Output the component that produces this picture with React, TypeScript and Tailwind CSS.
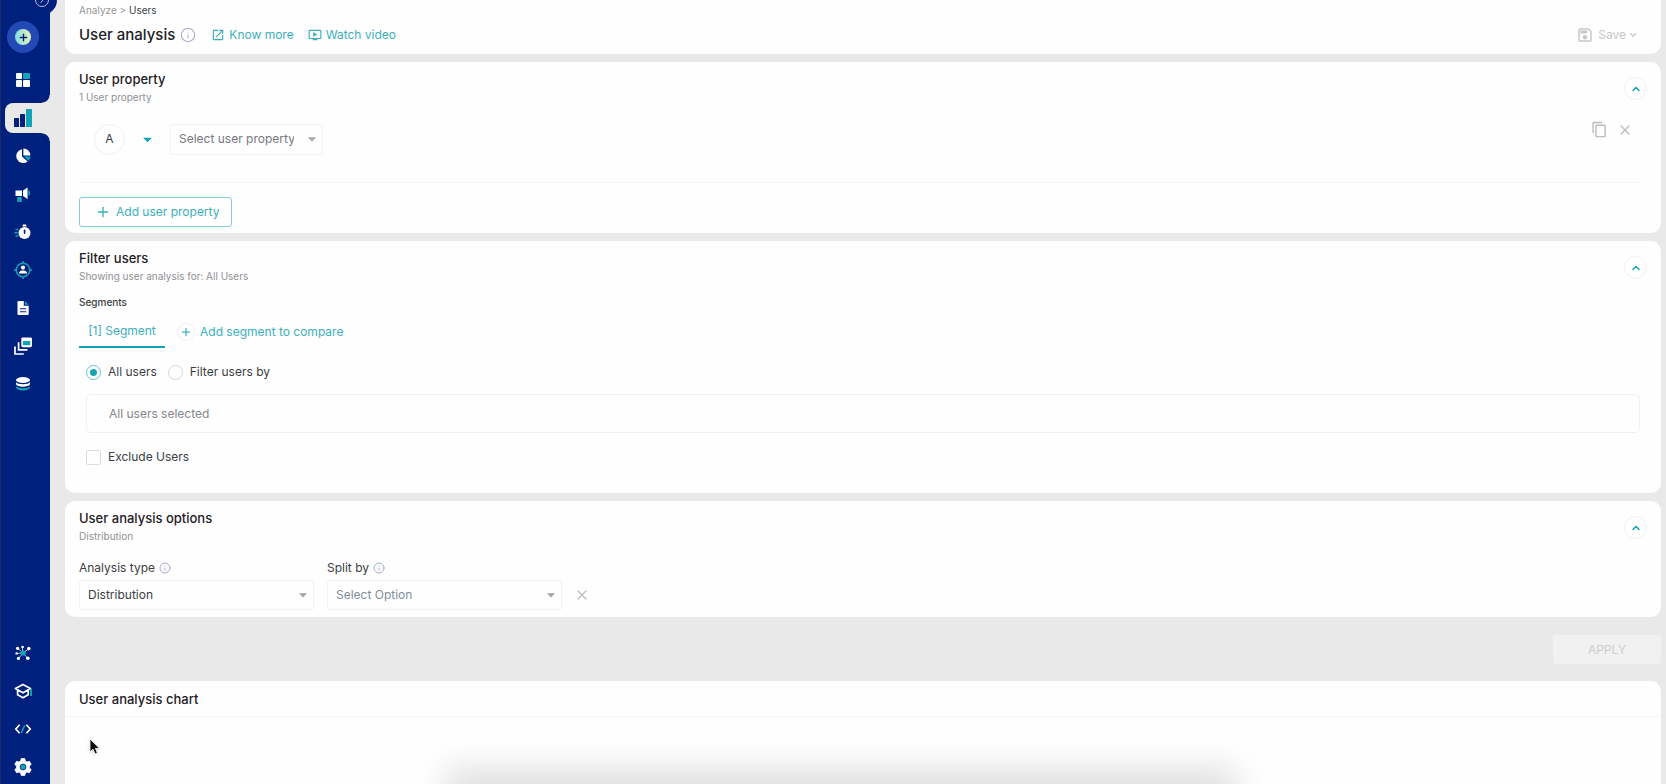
import React, { useState } from "react";
import { ChevronDown, ChevronRight, ChevronUp, Info, Plus, X } from "lucide-react";
import {
  MdArrowDropDown,
  MdContentCopy,
  MdOndemandVideo,
  MdOpenInNew,
  MdOutlineSave,
} from "react-icons/md";

const TEAL = "#12a3b4";

interface NavItem {
  label: string;
  icon: React.ReactNode;
  active?: boolean;
}

const Icon: React.FC<{ children: React.ReactNode }> = ({ children }) => (
  <svg viewBox="0 0 18 18" className="w-[18px] h-[18px]" fill="#fff" aria-hidden>
    {children}
  </svg>
);

const mainNav: NavItem[] = [
  {
    label: "Dashboards",
    icon: (
      <Icon>
        <rect x="2" y="2" width="6" height="6" rx="1" />
        <rect x="9" y="2" width="7" height="6" rx="1" fill={TEAL} />
        <rect x="2" y="9" width="6" height="7" rx="1" />
        <rect x="9" y="9" width="7" height="7" rx="1" />
      </Icon>
    ),
  },
  {
    label: "Analyze",
    active: true,
    icon: (
      <Icon>
        <rect x="0" y="9" width="5" height="9" rx="0.6" fill="#00207e" />
        <rect x="6" y="5" width="5" height="13" rx="0.6" fill="#00207e" />
        <rect x="12" y="0" width="6" height="18" rx="0.6" fill={TEAL} />
      </Icon>
    ),
  },
  {
    label: "Segment",
    icon: (
      <Icon>
        <path d="M8 2.2A7 7 0 1 0 13.6 14.6L8 9.6Z" />
        <path d="M9.4 1.4A7.2 7.2 0 0 1 16.4 8.4H9.4Z" />
        <path d="M10 9.6H16.4A6.5 6.5 0 0 1 14.4 13.8Z" fill={TEAL} />
      </Icon>
    ),
  },
  {
    label: "Engage",
    icon: (
      <Icon>
        <path d="M1.5 5.5H8V11H1.5Z" />
        <path d="M9 5.5L13.6 2.4V14L9 11Z" />
        <path d="M14.4 5A3.4 3.4 0 0 1 14.4 11Z" fill={TEAL} />
        <rect x="3.2" y="12" width="4.6" height="5" rx="0.5" fill={TEAL} />
      </Icon>
    ),
  },
  {
    label: "Live",
    icon: (
      <Icon>
        <circle cx="10.5" cy="10" r="6" />
        <rect x="8.6" y="1.6" width="3.8" height="2" rx="0.6" />
        <rect x="9.8" y="6.5" width="1.6" height="4.5" rx="0.7" fill="#00207e" />
        <path d="M1.5 6.5H4.4M0.5 9.8H3.6M1.5 13H4.4" stroke={TEAL} strokeWidth="1.4" />
      </Icon>
    ),
  },
  {
    label: "Users",
    icon: (
      <Icon>
        <circle cx="9" cy="9" r="6.8" fill="none" stroke={TEAL} strokeWidth="1.5" />
        <path d="M9 0V3M9 15V18M0 9H3M15 9H18" stroke={TEAL} strokeWidth="1.5" />
        <circle cx="9" cy="6.6" r="2.1" />
        <path d="M5 12.4C5 10 7.4 9.5 9 9.5S13 10 13 12.4Z" />
      </Icon>
    ),
  },
  {
    label: "Reports",
    icon: (
      <Icon>
        <path d="M4.5 2H9.8V6.8H14.7V15A1 1 0 0 1 13.7 16H4.5A1 1 0 0 1 3.5 15V3A1 1 0 0 1 4.5 2Z" />
        <path d="M10.8 2L14.7 5.8H10.8Z" fill={TEAL} />
        <path d="M6 9.8H12.2M6 12.8H12.2" stroke="#00207e" strokeWidth="1.1" />
      </Icon>
    ),
  },
  {
    label: "Content",
    icon: (
      <Icon>
        <rect x="7.3" y="0.4" width="10.7" height="9.8" rx="1.4" />
        <rect x="9" y="4" width="7.2" height="4.2" fill={TEAL} />
        <path
          d="M4.6 5.2V12.8H13.4M1 9.4V17H9.8"
          fill="none"
          stroke="#fff"
          strokeWidth="1.7"
        />
      </Icon>
    ),
  },
  {
    label: "Data",
    icon: (
      <Icon>
        <ellipse cx="9" cy="5" rx="7" ry="3" />
        <path d="M2 7.2C3 9.8 15 9.8 16 7.2V9C15 12.6 3 12.6 2 9Z" />
        <path d="M2 11.2C3 13.8 15 13.8 16 11.2V12.4C15 16.4 3 16.4 2 12.4Z" fill={TEAL} />
      </Icon>
    ),
  },
];

const bottomNav: NavItem[] = [
  {
    label: "Integrations",
    icon: (
      <Icon>
        <path
          d="M9 9L4 4.4M9 9L8.2 2.6M9 9L15 4.6M9 9L2.8 9.4M9 9L4.6 14.6M9 9L13.8 14.4"
          stroke="#fff"
          strokeWidth="0.7"
        />
        <circle cx="3.6" cy="4.4" r="1.6" />
        <circle cx="8.6" cy="3" r="1.3" />
        <circle cx="14.8" cy="4.6" r="1.8" />
        <circle cx="2.6" cy="9.4" r="1.2" />
        <circle cx="4.4" cy="14.4" r="1.6" />
        <circle cx="13.8" cy="14.2" r="1.8" />
        <circle cx="9.2" cy="9" r="2.6" fill={TEAL} />
      </Icon>
    ),
  },
  {
    label: "Academy",
    icon: (
      <Icon>
        <path
          d="M1.4 6.6L9 2.4L16.4 6.6L9 10.8ZM3.6 8.2V12.8L9 15.8L14.2 12.8V8.2"
          fill="none"
          stroke="#fff"
          strokeWidth="1.7"
          strokeLinejoin="round"
        />
        <path d="M17 7V14" stroke={TEAL} strokeWidth="1.9" />
      </Icon>
    ),
  },
  {
    label: "Developers",
    icon: (
      <Icon>
        <path
          d="M5.6 4.8L1.8 9L5.6 13.2M12.4 4.8L16.2 9L12.4 13.2"
          fill="none"
          stroke="#fff"
          strokeWidth="1.7"
        />
        <path d="M10.8 5.4L7.2 12.8" stroke={TEAL} strokeWidth="1.5" />
      </Icon>
    ),
  },
  {
    label: "Settings",
    icon: (
      <Icon>
        <path
          d="M7.2 0.6H10.8L11.3 3L13 4L15.4 3.2L17.2 6.4L15.4 8V10L17.2 11.6L15.4 14.8L13 14L11.3 15L10.8 17.4H7.2L6.7 15L5 14L2.6 14.8L0.8 11.6L2.6 10V8L0.8 6.4L2.6 3.2L5 4L6.7 3Z"
          stroke="#fff"
          strokeWidth="0.8"
          strokeLinejoin="round"
        />
        <circle cx="9" cy="9" r="2.9" fill={TEAL} stroke="#00207e" strokeWidth="0.8" />
      </Icon>
    ),
  },
];

const NavButton: React.FC<{ item: NavItem }> = ({ item }) => (
  <div className="relative flex items-center h-[38px] pl-1">
    {item.active && (
      <>
        {/* rounded notches joining the tab with the page */}
        <span className="absolute right-0 -top-1 w-2 h-2 bg-[radial-gradient(circle_at_0_0,transparent_7px,#e9e9e9_8px)]" />
        <span className="absolute right-0 -bottom-1 w-2 h-2 bg-[radial-gradient(circle_at_0_100%,transparent_7px,#e9e9e9_8px)]" />
      </>
    )}
    <button
      aria-label={item.label}
      className={
        item.active
          ? "flex items-center w-full h-[30px] pl-[9px] rounded-l-lg bg-[#e9e9e9]"
          : "flex items-center w-full h-[30px] pl-[9px]"
      }
    >
      {item.icon}
    </button>
  </div>
);

const Sidebar: React.FC = () => (
  <nav className="relative flex flex-col flex-shrink-0 w-[50px] bg-[#00207e] border-l border-[#1a2a6e]">
    <button
      aria-label="Expand menu"
      className="absolute left-[26px] -top-[15px] w-[30px] h-[30px] rounded-full bg-[#00207e] flex items-center justify-center"
    >
      <span className="w-[14px] h-[14px] rounded-full border border-[#b9c3e4] flex items-center justify-center">
        <ChevronRight className="w-[10px] h-[10px] text-white" />
      </span>
    </button>
    <button
      aria-label="Create new"
      className="mt-[21px] mb-2 ml-[6px] w-8 h-8 rounded-full bg-[#2349b4] flex items-center justify-center flex-shrink-0"
    >
      <span className="w-4 h-4 rounded-full bg-linear-to-r from-[#7fdcdf] to-[#e6f2b4] flex items-center justify-center">
        <Plus className="w-[11px] h-[11px] text-[#00207e]" strokeWidth={3} />
      </span>
    </button>
    {mainNav.map((item) => (
      <NavButton key={item.label} item={item} />
    ))}
    <div className="mt-auto -mb-[2px]">
      {bottomNav.map((item) => (
        <NavButton key={item.label} item={item} />
      ))}
    </div>
  </nav>
);

interface CardProps {
  title: string;
  subtitle: string;
  className?: string;
  children: React.ReactNode;
}

const Card: React.FC<CardProps> = ({ title, subtitle, className, children }) => {
  const [open, setOpen] = useState(true);

  return (
    <section className={`bg-[#fefefe] rounded-[10px] px-[14px] pt-[7px] ${className ?? ""}`}>
      <div className="flex items-start justify-between">
        <div>
          <h2 className="text-[13px] leading-5 font-medium text-[#1f2024]">{title}</h2>
          <p className="text-[10px] leading-4 text-[#8f9095]">{subtitle}</p>
        </div>
        <button
          aria-label={`Toggle ${title}`}
          aria-expanded={open}
          onClick={() => setOpen(!open)}
          className="mt-2 w-[23px] h-[23px] rounded-full border border-[#f0f0f5] flex items-center justify-center"
        >
          <ChevronUp className="w-3 h-3 text-[#12a3b4]" strokeWidth={3} />
        </button>
      </div>
      {open && children}
    </section>
  );
};

interface DropdownProps {
  label: string;
  id: string;
  value: string;
  className: string;
}

const Dropdown: React.FC<DropdownProps> = ({ label, id, value, className }) => (
  <div className={`relative flex items-center ${className}`}>
    <select
      id={id}
      aria-label={label}
      className="appearance-none w-full h-full pl-2 pr-7 bg-transparent border border-[#f2f2f6] rounded-[3px]"
    >
      <option>{value}</option>
    </select>
    <MdArrowDropDown className="absolute right-px w-5 h-5 text-[#a2a3a8] pointer-events-none" />
  </div>
);

export default function App() {
  const [scope, setScope] = useState("all");

  return (
    <div className="relative flex h-screen overflow-hidden bg-[#e9e9e9] font-['Inter',sans-serif] text-xs text-[#3c3d42]">
      <Sidebar />

      <main className="flex-1 flex flex-col min-w-0 pl-[15px] pr-[5px]">
        <header className="flex items-end justify-between bg-[#fefefe] rounded-b-[10px] px-[14px] pt-[3px] pb-[7px]">
          <div>
            <p className="text-[10px] leading-[14px] text-[#97989c]">
              <a href="#analyze">Analyze</a> &gt;{" "}
              <span className="text-[#3c3d42]">Users</span>
            </p>
            <div className="flex items-center mt-[6px] h-6">
              <h1 className="text-[15px] leading-6 font-medium text-[#1f2024]">
                User analysis
              </h1>
              <Info className="ml-[5px] w-4 h-4 text-[#aaacca]" strokeWidth={1.6} />
              <a href="#docs" className="flex items-center gap-1 ml-[15px] text-[#3bb0bc]">
                <MdOpenInNew className="w-[14px] h-[14px]" />
                Know more
              </a>
              <a href="#video" className="flex items-center gap-1 ml-[14px] text-[#3bb0bc]">
                <MdOndemandVideo className="w-[14px] h-[14px]" />
                Watch video
              </a>
            </div>
          </div>
          <button className="flex items-center h-6 mr-[9px] text-[#c6c7ca]">
            <MdOutlineSave className="w-[18px] h-[18px] mr-1" />
            Save
            <ChevronDown className="w-[10px] h-[10px] ml-[2px]" strokeWidth={3} />
          </button>
        </header>

        <Card title="User property" subtitle="1 User property" className="mt-2 pb-[6px]">
          <div className="flex items-start justify-between mr-[6px] h-[78px] pt-4 border-b border-[#f6f6f9]">
            <div className="flex items-center h-8 mt-[2px]">
              <span className="ml-[15px] w-[31px] h-[31px] rounded-full border border-[#f0f0f5] flex items-center justify-center">
                A
              </span>
              <button aria-label="Change property" className="ml-3 mr-3">
                <MdArrowDropDown className="w-[21px] h-[21px] text-[#12a3b4]" />
              </button>
              <Dropdown
                id="user-property"
                label="User property"
                value="Select user property"
                className="w-[153px] h-[31px] text-[#77787f]"
              />
            </div>
            <div className="flex items-center gap-[9px] mr-2 text-[#bcbdc0]">
              <button aria-label="Duplicate">
                <MdContentCopy className="w-[17px] h-[17px]" />
              </button>
              <button aria-label="Remove">
                <X className="w-4 h-4" strokeWidth={2} />
              </button>
            </div>
          </div>
          <button className="flex items-center mt-[14px] h-[30px] w-[153px] pl-[15px] gap-[5px] border border-[#86cfd7] rounded-[3px] text-[#3bb0bc]">
            <Plus className="w-4 h-4" strokeWidth={2} />
            Add user property
          </button>
        </Card>

        <Card
          title="Filter users"
          subtitle="Showing user analysis for: All Users"
          className="mt-2 pb-7"
        >
          <h3 className="mt-[10px] text-[10px] leading-4 font-medium">Segments</h3>
          <div className="flex items-center mt-[5px] text-[#3bb0bc]">
            <button className="h-[33px] w-[86px] border-b-2 border-[#12a3b4]">
              [1] Segment
            </button>
            <button className="flex items-center ml-3">
              <span className="w-[18px] h-[18px] mr-[5px] rounded-full border border-[#f0f0f5] flex items-center justify-center">
                <Plus className="w-3 h-3" strokeWidth={2.5} />
              </span>
              Add segment to compare
            </button>
          </div>
          <div className="flex items-center mt-4 pl-[7px]">
            {[
              { id: "all", text: "All users" },
              { id: "filter", text: "Filter users by" },
            ].map((o) => (
              <label key={o.id} className="flex items-center mr-[11px]">
                <input
                  type="radio"
                  name="scope"
                  checked={scope === o.id}
                  onChange={() => setScope(o.id)}
                  className="appearance-none w-[15px] h-[15px] mr-[7px] rounded-full border border-[#d5d6de] checked:border-[#6cc4ce] checked:bg-[radial-gradient(circle,#12a3b4_3px,transparent_4px)]"
                />
                {o.text}
              </label>
            ))}
          </div>
          <input
            readOnly
            aria-label="Selected users"
            value="All users selected"
            className="block ml-[7px] mt-[14px] w-[calc(100%-14px)] h-[39px] px-[22px] rounded-[5px] border border-[#efeff4] text-[#85868b] outline-none"
          />
          <label className="flex items-center mt-4 ml-[7px]">
            <input
              type="checkbox"
              className="appearance-none w-[15px] h-[15px] mr-[7px] rounded-[2px] border border-[#dadbe4]"
            />
            Exclude Users
          </label>
        </Card>

        <Card title="User analysis options" subtitle="Distribution" className="mt-2 pb-[7px]">
          <div className="flex items-end mt-[14px]">
            <div>
              <label htmlFor="analysis-type" className="flex items-center h-5 mb-[2px]">
                Analysis type
                <Info className="ml-1 w-3 h-3 text-[#aaacca]" />
              </label>
              <Dropdown
                id="analysis-type"
                label="Analysis type"
                value="Distribution"
                className="w-[235px] h-[30px]"
              />
            </div>
            <div className="ml-[13px]">
              <label htmlFor="split-by" className="flex items-center h-5 mb-[2px]">
                Split by
                <Info className="ml-1 w-3 h-3 text-[#aaacca]" />
              </label>
              <Dropdown
                id="split-by"
                label="Split by"
                value="Select Option"
                className="w-[235px] h-[30px] text-[#7f8f9b]"
              />
            </div>
            <button aria-label="Clear split" className="ml-3 mb-[7px] text-[#c0c1c4]">
              <X className="w-4 h-4" />
            </button>
          </div>
        </Card>

        <div className="flex justify-end pt-[18px] pb-[17px]">
          <button
            disabled
            className="w-[108px] h-[29px] rounded-[3px] bg-[#f1f1f1] text-[#cdcdd0]"
          >
            APPLY
          </button>
        </div>

        <section className="flex-1 bg-[#fefefe] rounded-t-[10px]">
          <h2 className="h-9 px-[14px] text-[13px] leading-9 font-medium text-[#1f2024] border-b border-[#f4f4f9]">
            User analysis chart
          </h2>
        </section>
      </main>

      {/* shadow of the panel docked below the window */}
      <div className="absolute left-[28%] right-[27%] -bottom-4 h-3 shadow-[0_0_32px_20px_rgba(0,0,0,0.12)]" />

      {/* pointer */}
      <svg
        viewBox="0 0 12 18"
        className="absolute left-[89px] top-[738px] w-3 h-[18px] drop-shadow"
        aria-hidden
      >
        <path
          d="M1 1V14L4 11.2L6 16L8.4 15L6.4 10.4H10.6Z"
          fill="#111"
          stroke="#fff"
          strokeWidth="0.8"
        />
      </svg>
    </div>
  );
}
